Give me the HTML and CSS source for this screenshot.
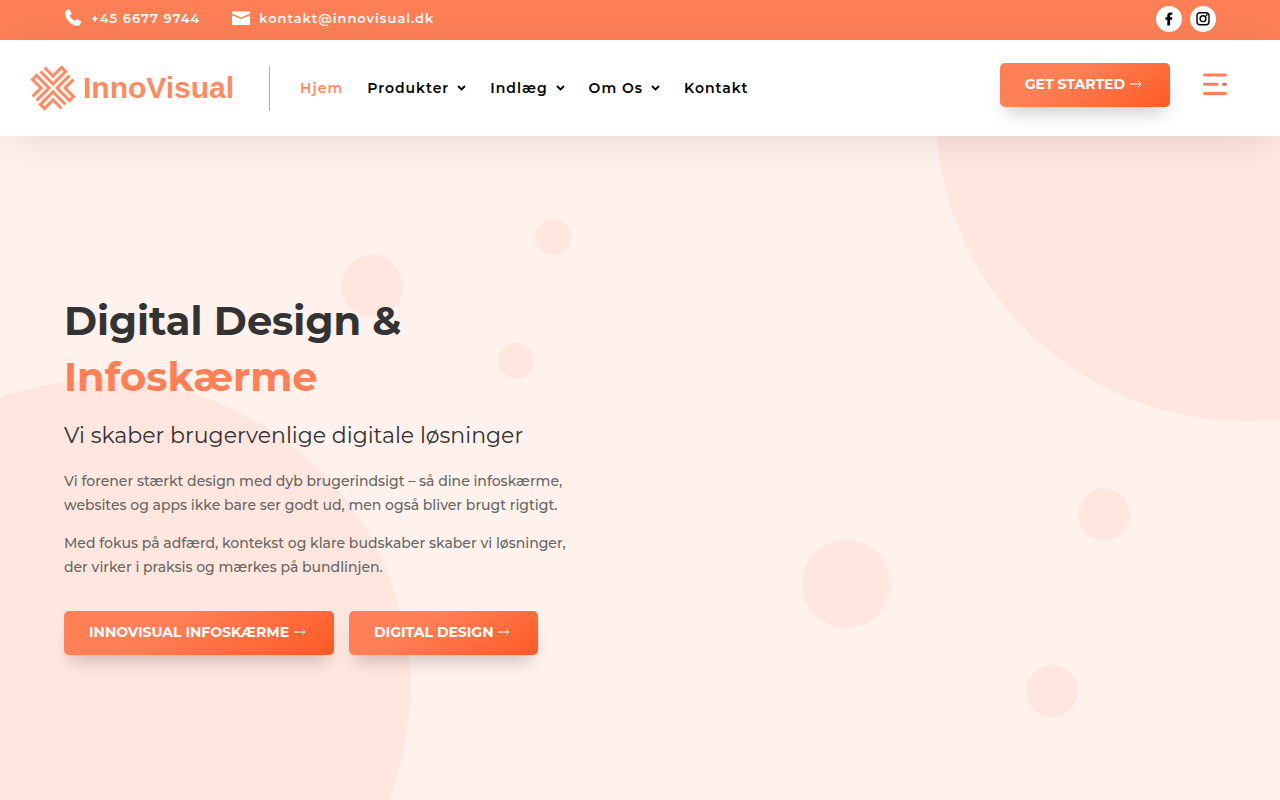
FILE: index.html
```html
<!DOCTYPE html>
<html lang="da">
<head>
<meta charset="utf-8">
<meta name="viewport" content="width=device-width, initial-scale=1">
<title>InnoVisual</title>
<link rel="stylesheet" href="styles.css">
</head>
<body>
<div class="topbar">
  <div class="contacts">
    <a class="contact" href="tel:+4566779744">
      <svg width="18" height="18" viewBox="0 0 18 18" aria-hidden="true"><path fill="currentColor" d="M1.800 1.700 4 .5c.6-.3 1.400-.2 1.700.4l1.600 3.200c.3.500.1 1.100-.3 1.500L5.800 6.800c.9 2.200 2.600 3.900 4.800 4.900l1.300-1.300c.4-.4 1-.5 1.500-.2l3.200 1.900c.6.3.7 1 .4 1.600l-1.200 2c-.7 1.200-2.200 1.500-3.500 1.200C7.100 15.600 2.400 10.900 1 5.400.7 4 .7 2.500 1.800 1.700z"/></svg>
      <span>+45 6677 9744</span>
    </a>
    <a class="contact" href="mailto:kontakt@innovisual.dk">
      <svg width="18" height="18" viewBox="0 0 18 18" aria-hidden="true"><path fill="currentColor" d="M0 2.500h18v2L9 8.400 0 4.500zM0 6.200l9 3.900 9-3.900v8.800c0 .6-.4 1-1 1H1c-.6 0-1-.4-1-1z"/></svg>
      <span>kontakt@innovisual.dk</span>
    </a>
  </div>
  <div class="socials">
    <a class="social" href="#" aria-label="Facebook"><svg width="14" height="14" viewBox="0 0 14 14"><path fill="currentColor" d="M5.300 13.500V7.700H3.500V5.200h1.800V3.600C5.300 1.500 6.500.4 8.500.4h1.800v2.400H9.100c-.8 0-1 .4-1 1.100v1.300h2.200L10 7.700H8.100v5.800z"/></svg></a>
    <a class="social" href="#" aria-label="Instagram"><svg width="14" height="14" viewBox="0 0 14 14" fill="none" stroke="currentColor" stroke-width="1.400"><rect x="1" y=".7" width="12" height="12" rx="3"/><circle cx="7" cy="6.700" r="2.900"/><path d="M10.300 3.500 11 2.800" stroke-linecap="round"/></svg></a>
  </div>
</div>

<header class="header">
  <a class="logo" href="#" aria-label="InnoVisual">
    <svg width="46" height="46" viewBox="-23 -23 46 46" aria-hidden="true">
      <defs>
        <path id="arm" d="M-8.500-20.500 0-12 8.500-20.500 12.500-16.500 0-4-12.500-16.500"/>
      </defs>
      <g fill="none" stroke="currentColor" stroke-width="3.100"><use href="#arm"/><use href="#arm" transform="rotate(90)"/><use href="#arm" transform="rotate(180)"/><use href="#arm" transform="rotate(270)"/></g>
    </svg>
    <span>InnoVisual</span>
  </a>
  <nav class="nav">
    <a class="active" href="#">Hjem</a>
    <a href="#">Produkter <svg class="chev" width="9" height="6" viewBox="0 0 9 6"><path d="M1 1 4.500 4.500 8 1"/></svg></a>
    <a href="#">Indlæg <svg class="chev" width="9" height="6" viewBox="0 0 9 6"><path d="M1 1 4.500 4.500 8 1"/></svg></a>
    <a href="#">Om Os <svg class="chev" width="9" height="6" viewBox="0 0 9 6"><path d="M1 1 4.500 4.500 8 1"/></svg></a>
    <a href="#">Kontakt</a>
  </nav>
  <div class="actions">
    <a class="btn" href="#">GET STARTED <svg width="12" height="8" viewBox="0 0 12 8"><path d="M0 4h11M8 1l3 3-3 3"/></svg></a>
    <button class="menu" type="button" aria-label="Menu">
      <svg width="24" height="24" viewBox="0 0 24 24" fill="none" stroke-width="3" stroke-linecap="round"><path stroke="#ff8057" d="M1.500 2h21M1.500 11.200h12.500M1.500 20.400h21"/><path stroke="#c9745a" d="M20.500 11.200h2"/></svg>
    </button>
  </div>
</header>

<main class="hero">
  <svg class="bubbles" viewBox="0 0 1280 664" preserveAspectRatio="xMidYMid slice" aria-hidden="true">
    <circle cx="1245" cy="-24" r="309"/><circle cx="102" cy="552" r="308"/>
    <circle cx="372" cy="150" r="31"/><circle cx="553" cy="101" r="18"/><circle cx="516" cy="225" r="18"/>
    <circle cx="846" cy="448" r="44"/><circle cx="1104" cy="378" r="26"/><circle cx="1052" cy="555" r="26"/>
  </svg>
  <div class="copy">
    <h1>Digital Design &amp;<br><span>Infoskærme</span></h1>
    <h2>Vi skaber brugervenlige digitale løsninger</h2>
    <p>Vi forener stærkt design med dyb brugerindsigt – så dine infoskærme,<br>websites og apps ikke bare ser godt ud, men også bliver brugt rigtigt.</p>
    <p>Med fokus på adfærd, kontekst og klare budskaber skaber vi løsninger,<br>der virker i praksis og mærkes på bundlinjen.</p>
    <div class="buttons">
      <a class="btn" href="#">INNOVISUAL INFOSKÆRME <svg width="12" height="8" viewBox="0 0 12 8"><path d="M0 4h11M8 1l3 3-3 3"/></svg></a>
      <a class="btn" href="#">DIGITAL DESIGN <svg width="12" height="8" viewBox="0 0 12 8"><path d="M0 4h11M8 1l3 3-3 3"/></svg></a>
    </div>
  </div>
</main>
</body>
</html>
```
FILE: styles.css
```css
* { box-sizing: border-box; }
body {
  margin: 0;
  min-height: 100vh;
  display: flex;
  flex-direction: column;
  font-family: Montserrat, Inter, sans-serif;
  font-weight: 500;
  color: #666;
  background: #fff1ec;
}
a { color: inherit; text-decoration: none; }
svg { flex: none; }

.topbar {
  display: flex;
  justify-content: space-between;
  align-items: flex-start;
  height: 40px;
  padding: 6px 5% 0;
  background: #ff8057;
  color: #fff;
}
.contacts { display: flex; gap: 32px; }
.contact {
  display: flex;
  align-items: center;
  gap: 9px;
  line-height: 24px;
  font-size: 13px;
  font-weight: 600;
  letter-spacing: 1px;
}
.socials { display: flex; gap: 8px; }
.social {
  display: flex;
  align-items: center;
  justify-content: center;
  width: 26px;
  height: 26px;
  border-radius: 50%;
  background: #fff;
  color: #000;
}

.header {
  position: relative;
  z-index: 1;
  display: flex;
  align-items: center;
  height: 96px;
  padding: 0 53px 0 30px;
  background: #fff;
  box-shadow: 0 4px 50px -10px rgba(0, 0, 0, .16);
}
.logo {
  display: flex;
  align-items: center;
  gap: 7px;
  width: 240px;
  height: 45px;
  border-right: 1px solid #b9aaa6;
  font-family: "Liberation Sans", sans-serif;
  font-size: 30px;
  font-weight: 700;
  color: #ff8a63;
}
.nav {
  display: flex;
  gap: 24px;
  margin-left: 30px;
  font-size: 14px;
  font-weight: 600;
  letter-spacing: 1px;
  color: #000;
}
.nav a { display: flex; align-items: center; gap: 8px; white-space: nowrap; }
.nav .active { color: #ff8a63; }
.chev { fill: none; stroke: currentColor; stroke-width: 1.8; }
.actions { display: flex; align-items: center; gap: 33px; margin-left: auto; padding-bottom: 6px; }
.menu { display: flex; padding: 0; border: 0; background: none; cursor: pointer; }

.btn {
  display: inline-flex;
  align-items: center;
  gap: 5px;
  height: 44px;
  padding: 0 28px 2px 25px;
  border-radius: 5px;
  background: linear-gradient(150deg, #ff8057 35%, #ff5a24 100%);
  box-shadow: 0 12px 18px -6px rgba(0, 0, 0, .2);
  color: #fff;
  font-size: 14px;
  font-weight: 700;
  white-space: nowrap;
}
.btn svg { fill: none; stroke: currentColor; stroke-width: 1; }

.hero {
  position: relative;
  flex: 1;
  display: flex;
  align-items: center;
  overflow: hidden;
  padding: 12px 5% 0;
}
.bubbles { position: absolute; inset: 0; width: 100%; height: 100%; fill: #ffe6de; }
.copy { position: relative; }
h1 { margin: 0; font-size: 40px; line-height: 56px; font-weight: 700; color: #333; }
h1 span { color: #ff8057; }
h2 { margin: 17px 0 19px; font-size: 22px; line-height: 28px; font-weight: 400; color: #333; }
p { margin: 0 0 14px; font-size: 14px; line-height: 24px; }
.buttons { display: flex; gap: 15px; margin-top: 32px; }
```
